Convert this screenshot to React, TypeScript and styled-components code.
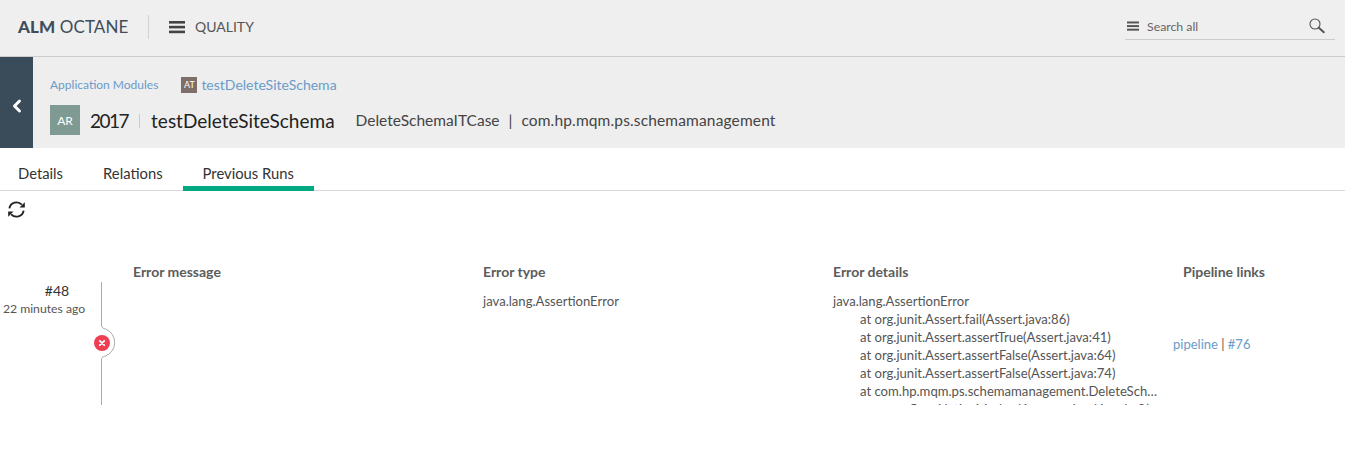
import React from "react";
import styled, { createGlobalStyle } from "styled-components";
import { ChevronLeft } from "lucide-react";

const GlobalStyle = createGlobalStyle`
  html, body {
    margin: 0;
    padding: 0;
    background: #fff;
    font-family: "Lato", "Open Sans", sans-serif;
    color: #444;
  }
`;

const Page = styled.div`
  width: 1345px;
  height: 451px;
  overflow: hidden;
  background: #fff;
`;

const TopBar = styled.header`
  height: 53px;
  padding: 0 0 3px 18px;
  background: #efefef;
  border-bottom: 1px solid #ccc;
  display: flex;
  align-items: center;
`;

const Logo = styled.div`
  font-size: 17px;
  color: #3f4d5a;
  letter-spacing: 0.1px;
  width: 111px;
  white-space: nowrap;
  b {
    font-weight: 900;
  }
`;

const Divider = styled.div`
  width: 1px;
  height: 24px;
  background: #d2d2d2;
  margin: 0 20px 0 19px;
`;

const ModuleLabel = styled.div`
  display: flex;
  align-items: center;
  gap: 10px;
  font-size: 14px;
  color: #555;
`;

const SearchBox = styled.div`
  margin-left: auto;
  margin-right: 10px;
  width: 210px;
  height: 26px;
  box-sizing: border-box;
  border-bottom: 1px solid #ccc;
  display: flex;
  align-items: center;
  padding: 0 10px 0 2px;
  font-size: 12.3px;
  color: #666;
  gap: 8px;
  span {
    flex: 1;
  }
`;

const Header = styled.section`
  height: 91px;
  background: #eee;
  display: flex;
`;

const BackButton = styled.div`
  width: 33px;
  padding-top: 6px;
  box-sizing: border-box;
  background: #3a4b5a;
  display: flex;
  align-items: center;
  justify-content: center;
  color: #fff;
`;

const HeaderBody = styled.div`
  padding: 19px 0 0 17px;
`;

const Crumbs = styled.div`
  display: flex;
  align-items: center;
  height: 17px;
  color: #6a9bc9;
`;

const CrumbLink = styled.span<{ $size: number }>`
  font-size: ${(p) => p.$size}px;
  white-space: nowrap;
`;

const Badge = styled.span<{ $size: number; $bg: string; $font: number }>`
  width: ${(p) => p.$size}px;
  height: ${(p) => p.$size}px;
  background: ${(p) => p.$bg};
  color: #fff;
  font-size: ${(p) => p.$font}px;
  display: inline-flex;
  align-items: center;
  justify-content: center;
  flex: none;
`;

const CrumbBadge = styled(Badge)`
  margin: 0 4px 0 23px;
`;

const TitleRow = styled.div`
  display: flex;
  align-items: center;
  margin-top: 12px;
  height: 30px;
  white-space: nowrap;
`;

const Title = styled.span`
  font-size: 19px;
  color: #222;
`;

const TitleYear = styled(Title)`
  margin-left: 10px;
  letter-spacing: -1.5px;
`;

const TitleBar = styled.span`
  width: 1px;
  height: 14px;
  background: #ccc;
  margin: 2px 11px 0 11px;
`;

const Subtitle = styled.span`
  font-size: 15.5px;
  color: #444;
  margin-left: 21px;
  word-spacing: 5px;
`;

const PackageName = styled.span`
  letter-spacing: 0.15px;
`;

const Tabs = styled.nav`
  height: 43px;
  box-sizing: border-box;
  border-bottom: 1px solid #d8d8d8;
  display: flex;
`;

const Tab = styled.div<{ $active?: boolean }>`
  height: 43px;
  box-sizing: border-box;
  padding: 16px 20px 0;
  font-size: 14.8px;
  color: #333;
  border-bottom: 5px solid ${(p) => (p.$active ? "#01a982" : "transparent")};
  &:first-child {
    padding-left: 18px;
  }
`;

const Toolbar = styled.div`
  height: 47px;
  padding: 10px 0 0 8px;
  box-sizing: border-box;
  color: #222;
`;

const ColumnHeads = styled.div`
  display: grid;
  grid-template-columns: repeat(3, 350px) auto;
  padding: 25px 0 0 133px;
  height: 44px;
  box-sizing: border-box;
  font-size: 14px;
  font-weight: 700;
  color: #5c5c5c;
`;

const Run = styled.div`
  height: 123px;
  overflow: hidden;
  display: flex;
`;

const RunInfo = styled.div`
  width: 90px;
  flex: none;
  text-align: center;
  margin-left: -1px;
`;

const RunNumber = styled.div`
  font-size: 14px;
  line-height: 18px;
  color: #333;
  padding-left: 26px;
`;

const RunTime = styled.div`
  font-size: 12.2px;
  line-height: 18px;
  color: #555;
  white-space: nowrap;
`;

const Timeline = styled.svg`
  flex: none;
  width: 44px;
  height: 123px;
`;

const Cell = styled.div`
  width: 350px;
  flex: none;
  font-size: 13.1px;
  line-height: 18px;
  padding-top: 10px;
  color: #555;
  box-sizing: border-box;
`;

const Trace = styled.div`
  padding-left: 27px;
  width: 327px;
  box-sizing: border-box;
  white-space: nowrap;
  overflow: hidden;
  text-overflow: ellipsis;
`;

const PipelineCell = styled.div`
  margin-left: -10px;
  align-self: center;
  font-size: 13px;
  color: #6a9bc9;
  white-space: pre;
`;

const PipeSep = styled.span`
  color: #555;
`;

const BarsIcon: React.FC<{ size: number; color: string }> = ({ size, color }) => (
  <svg width={size} height={size} viewBox="0 0 16 16" fill={color}>
    <rect x="0" y="2" width="16" height="2.600" />
    <rect x="0" y="6.800" width="16" height="2.600" />
    <rect x="0" y="11.600" width="16" height="2.600" />
  </svg>
);

const SearchIcon: React.FC = () => (
  <svg width="16" height="16" viewBox="0 0 16 16" fill="none" stroke="#555">
    <circle cx="6" cy="6" r="5" strokeWidth="1.100" />
    <path d="M9.800 9.800l5 4.400" strokeWidth="2" strokeLinecap="round" />
  </svg>
);

const RefreshIcon: React.FC = () => (
  <svg width="17" height="17" viewBox="0 0 16 16" fill="#222">
    <path d="M1.300 7A6.800 6.800 0 0 1 13 3.500" fill="none" stroke="#222" strokeWidth="1.800" />
    <path d="M15.800 1.200v5h-5z" />
    <path d="M14.700 9A6.800 6.800 0 0 1 3 12.500" fill="none" stroke="#222" strokeWidth="1.800" />
    <path d="M.2 14.800v-5h5z" />
  </svg>
);

const traces = [
  "at org.junit.Assert.fail(Assert.java:86)",
  "at org.junit.Assert.assertTrue(Assert.java:41)",
  "at org.junit.Assert.assertFalse(Assert.java:64)",
  "at org.junit.Assert.assertFalse(Assert.java:74)",
  "at com.hp.mqm.ps.schemamanagement.DeleteSchemaITCase.testDeleteSiteSchema(DeleteSchemaITCase.java:52)",
  "at sun.reflect.NativeMethodAccessorImpl.invoke0(Native Method)",
];

const App: React.FC = () => {
  return (
    <Page>
      <GlobalStyle />
      <TopBar>
        <Logo>
          <b>ALM</b> OCTANE
        </Logo>
        <Divider />
        <ModuleLabel>
          <BarsIcon size={16} color="#444" />
          QUALITY
        </ModuleLabel>
        <SearchBox>
          <BarsIcon size={12} color="#555" />
          <span>Search all</span>
          <SearchIcon />
        </SearchBox>
      </TopBar>
      <Header>
        <BackButton>
          <ChevronLeft size={20} strokeWidth={3.6} />
        </BackButton>
        <HeaderBody>
          <Crumbs>
            <CrumbLink $size={12}>Application Modules</CrumbLink>
            <CrumbBadge $size={16} $bg="#7d6f68" $font={9}>
              AT
            </CrumbBadge>
            <CrumbLink $size={14}>testDeleteSiteSchema</CrumbLink>
          </Crumbs>
          <TitleRow>
            <Badge $size={30} $bg="#7f9a93" $font={12}>
              AR
            </Badge>
            <TitleYear>2017</TitleYear>
            <TitleBar />
            <Title>testDeleteSiteSchema</Title>
            <Subtitle>
              DeleteSchemaITCase | <PackageName>com.hp.mqm.ps.schemamanagement</PackageName>
            </Subtitle>
          </TitleRow>
        </HeaderBody>
      </Header>
      <Tabs>
        <Tab>Details</Tab>
        <Tab>Relations</Tab>
        <Tab $active>Previous Runs</Tab>
      </Tabs>
      <Toolbar>
        <RefreshIcon />
      </Toolbar>
      <ColumnHeads>
        <div>Error message</div>
        <div>Error type</div>
        <div>Error details</div>
        <div>Pipeline links</div>
      </ColumnHeads>
      <Run>
        <RunInfo>
          <RunNumber>#48</RunNumber>
          <RunTime>22 minutes ago</RunTime>
        </RunInfo>
        <Timeline viewBox="0 0 44 123">
          <path
            d="M12.500 0V43c0 3 2 3.500 4 4a14.500 14.500 0 0 1 0 27c-2 .5-4 1-4 4V123"
            fill="none"
            stroke="#aaa"
            strokeWidth="1"
          />
          <circle cx="13" cy="61" r="8" fill="#ee3f52" />
          <path d="M10.800 58.800l4.400 4.400M15.200 58.800l-4.400 4.400" stroke="#fff" strokeWidth="1.800" strokeLinecap="round" />
        </Timeline>
        <Cell />
        <Cell>java.lang.AssertionError</Cell>
        <Cell>
          java.lang.AssertionError
          {traces.map((t) => (
            <Trace key={t}>{t}</Trace>
          ))}
        </Cell>
        <PipelineCell>
          pipeline <PipeSep>|</PipeSep> #76
        </PipelineCell>
      </Run>
    </Page>
  );
};

export default App;
